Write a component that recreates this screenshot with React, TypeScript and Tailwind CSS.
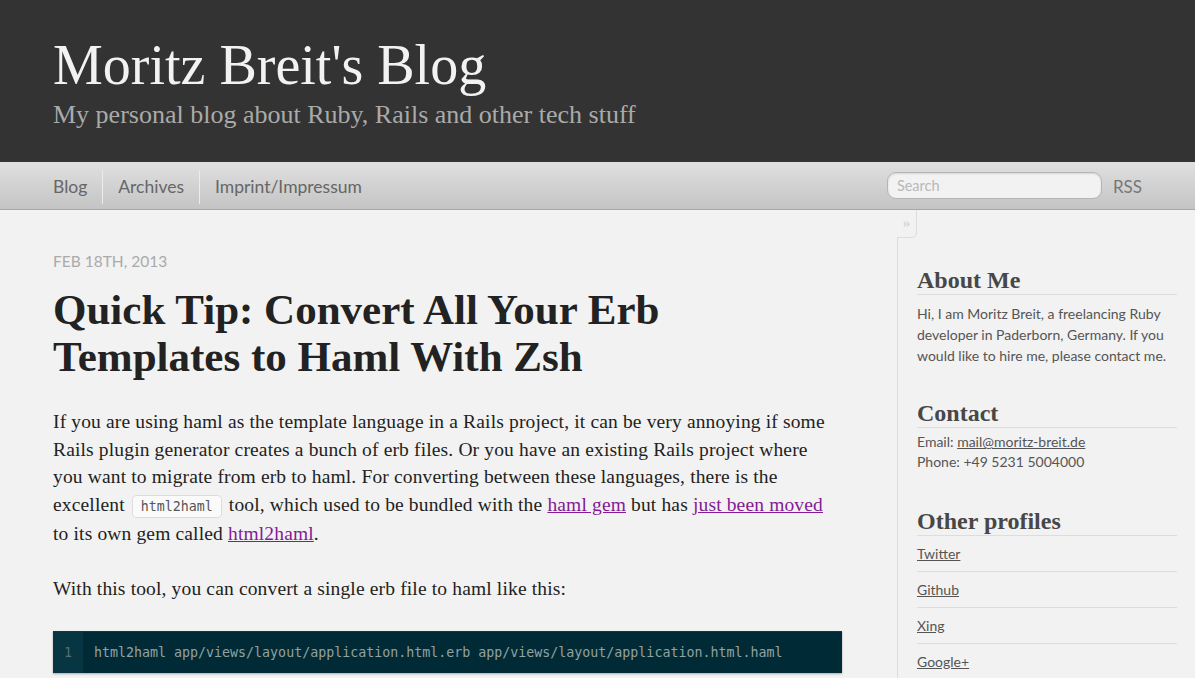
import React from 'react';

const serif = { fontFamily: '"Liberation Serif", "DejaVu Serif", serif' };
const sans = { fontFamily: 'Lato, "Liberation Sans", sans-serif' };
const mono = { fontFamily: '"DejaVu Sans Mono", "Liberation Mono", monospace' };

const profiles = ['Twitter', 'Github', 'Xing', 'Google+'];

export default function App() {
  return (
    <div className="min-h-[678px] w-full bg-[#f2f2f2]">
      {/* header */}
      <header className="bg-[#333333] h-[162px] pl-[53px] pt-[34px]">
        <h1 className="text-[56px] leading-[62px] text-[#f2f2f2]" style={serif}>
          Moritz Breit's Blog
        </h1>
        <h2 className="mt-[4px] text-[26px] leading-[30px] text-[#aaaaaa]" style={serif}>
          My personal blog about Ruby, Rails and other tech stuff
        </h2>
      </header>

      {/* navigation */}
      <nav
        className="h-[48px] flex items-center border-b border-[#a8a8a8] bg-gradient-to-b from-[#e0e0e0] to-[#c4c4c4] pl-[38px] pr-[53px]"
        style={sans}
      >
        <ul className="flex items-center flex-1 text-[17.5px] text-[#666666] pt-[3px]">
          <li className="px-[15px]">Blog</li>
          <li className="w-px h-[34px] bg-[#ececec]" />
          <li className="px-[15px]">Archives</li>
          <li className="w-px h-[34px] bg-[#ececec]" />
          <li className="px-[15px]">Imprint/Impressum</li>
        </ul>
        <div className="w-[215px] h-[27px] rounded-[9px] border border-[#b5b5b5] bg-[#f2f2f2] shadow-[inset_0_1px_2px_rgba(0,0,0,0.12)] flex items-center px-[9px] mr-[11px]">
          <span className="text-[14.5px] text-[#b8b8b8]">Search</span>
        </div>
        <span className="text-[17px] text-[#777777] pt-[3px]">RSS</span>
      </nav>

      <div className="flex">
        {/* article */}
        <main className="flex-1 pl-[53px] pr-[55px] pt-[41px]">
          <p className="text-[15.5px] leading-[20px] uppercase text-[#aaaaaa]" style={sans}>
            Feb 18th, 2013
          </p>
          <h1
            className="mt-[15px] text-[43px] leading-[47px] font-bold text-[#222222] pr-[120px]"
            style={serif}
          >
            Quick Tip: Convert All Your Erb Templates to Haml With Zsh
          </h1>
          <div
            className="text-[19.5px] leading-[27.5px] tracking-[0.15px] text-[#222222]"
            style={serif}
          >
            <p className="mt-[28px]">
              If you are using haml as the template language in a Rails project, it can be very
              annoying if some
              <br />
              Rails plugin generator creates a bunch of erb files. Or you have an existing Rails
              project where
              <br />
              you want to migrate from erb to haml. For converting between these languages, there
              is the
              <br />
              excellent{' '}
              <code
                className="text-[13.3px] tracking-normal text-[#555555] bg-[#fafafa] border border-[#dddddd] rounded-[4px] px-[8px] py-[3px] mx-[2px]"
                style={mono}
              >
                html2haml
              </code>{' '}
              tool, which used to be bundled with the{' '}
              <a className="underline text-[#841a95]">haml gem</a> but has{' '}
              <a className="underline text-[#841a95]">just been moved</a>
              <br />
              to its own gem called <a className="underline text-[#841a95]">html2haml</a>.
            </p>
            <p className="mt-[27px]">With this tool, you can convert a single erb file to haml like this:</p>
          </div>
          <div
            className="mt-[29px] flex bg-[#002b36] border-t border-[#0d3a46] shadow-[0_1px_2px_rgba(0,0,0,0.3)]"
            style={mono}
          >
            <div className="w-[30px] bg-[#073642] text-center text-[13.3px] leading-[19px] py-[11px] text-[#586e75]">
              1
            </div>
            <pre className="pl-[11px] text-[13.3px] leading-[19px] py-[11px] text-[#93a1a1]" style={mono}>
              html2haml app/views/layout/application.html.erb app/views/layout/application.html.haml
            </pre>
          </div>
        </main>

        {/* sidebar */}
        <aside className="w-[298px] flex flex-col">
          <div
            className="w-[20px] h-[28px] border-r border-b border-[#dcdcdc] rounded-br-[5px] flex items-center justify-center text-[15px] text-[#cccccc]"
            style={serif}
          >
            »
          </div>
          <div className="flex-1 border-l border-[#dcdcdc] pl-[19px] pr-[18px] pt-[28px] pb-[20px]">
            <section>
              <h3 className="text-[24px] leading-[28px] font-bold text-[#474747] border-b border-[#dddddd]" style={serif}>
                About Me
              </h3>
              <p className="mt-[8px] text-[14px] leading-[21px] text-[#555555]" style={sans}>
                Hi, I am Moritz Breit, a freelancing Ruby developer in Paderborn, Germany. If you
                would like to hire me, please contact me.
              </p>
            </section>
            <section className="mt-[33px]">
              <h3 className="text-[24px] leading-[28px] font-bold text-[#474747] border-b border-[#dddddd]" style={serif}>
                Contact
              </h3>
              <p className="mt-[4px] text-[14px] leading-[20px] text-[#555555]" style={sans}>
                Email: <a className="underline">mail@moritz-breit.de</a>
                <br />
                Phone: +49 5231 5004000
              </p>
            </section>
            <section className="mt-[35px]">
              <h3 className="text-[24px] leading-[28px] font-bold text-[#474747] border-b border-[#dddddd]" style={serif}>
                Other profiles
              </h3>
              <ul className="text-[14px] leading-[20px] text-[#555555]" style={sans}>
                {profiles.map((p) => (
                  <li key={p} className="py-[7.5px] border-b border-[#dddddd]">
                    <a className="underline">{p}</a>
                  </li>
                ))}
              </ul>
            </section>
          </div>
        </aside>
      </div>
    </div>
  );
}
